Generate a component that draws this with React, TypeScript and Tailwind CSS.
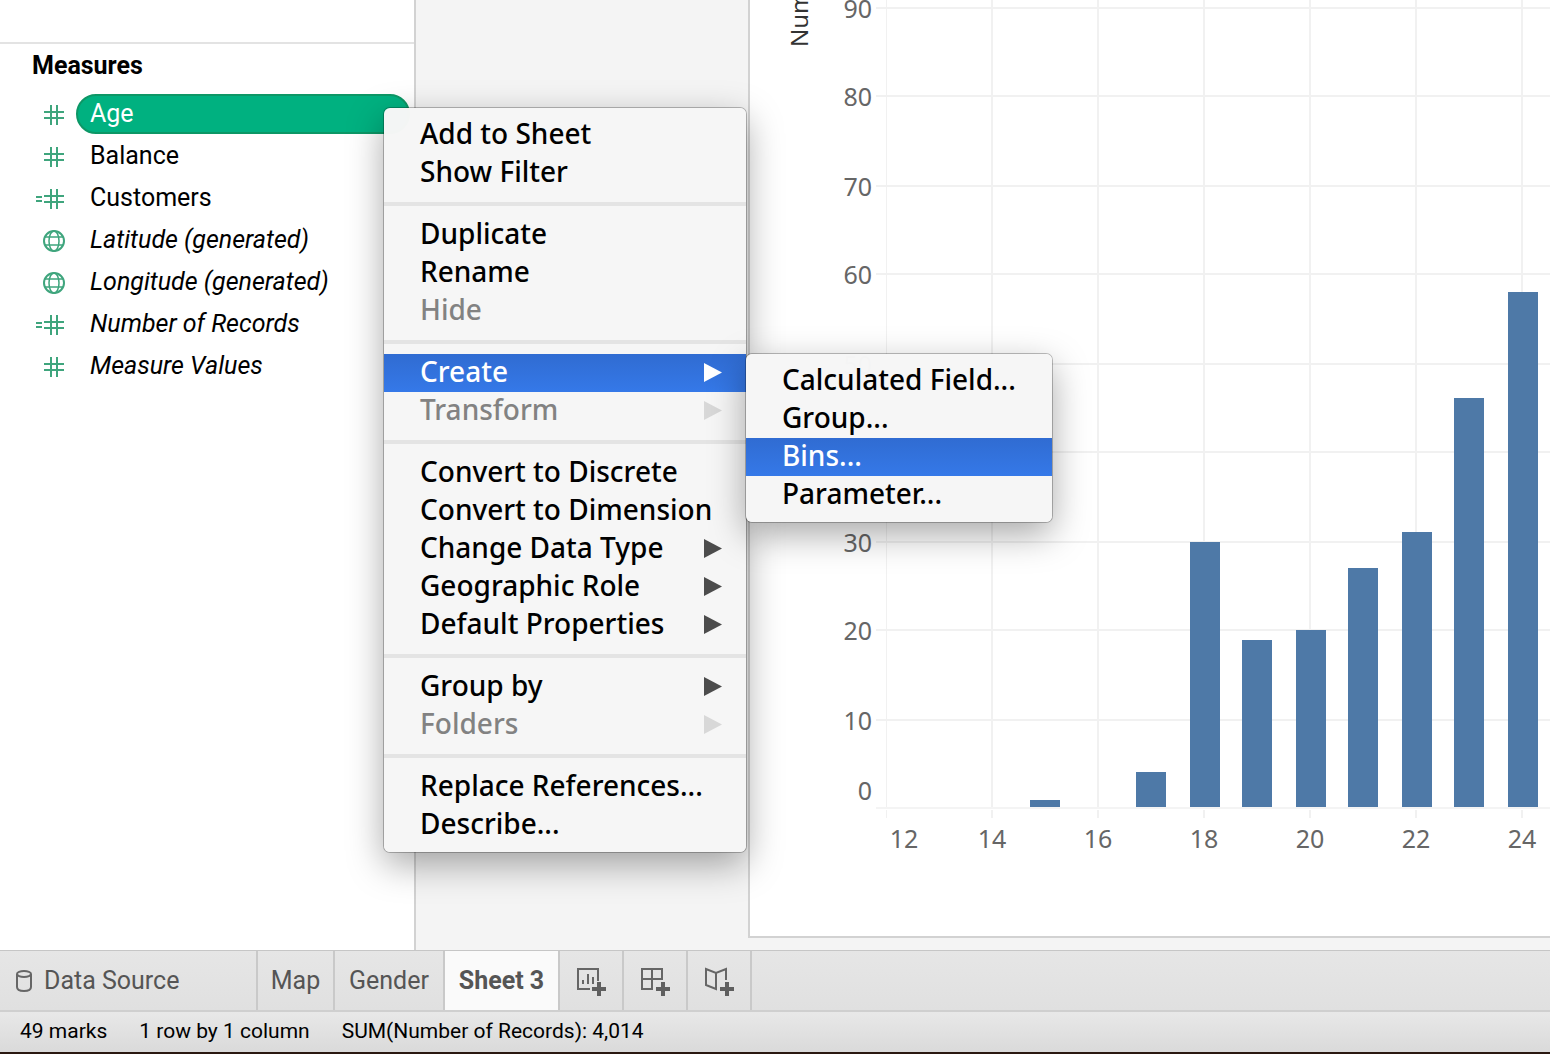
import React from "react";

type Field = { label: string; icon: "number" | "calc" | "globe"; italic?: boolean };

const fields: Field[] = [
  { label: "Balance", icon: "number" },
  { label: "Customers", icon: "calc" },
  { label: "Latitude (generated)", icon: "globe", italic: true },
  { label: "Longitude (generated)", icon: "globe", italic: true },
  { label: "Number of Records", icon: "calc", italic: true },
  { label: "Measure Values", icon: "number", italic: true },
];

type Entry = { label: string; disabled?: boolean; sub?: boolean; active?: boolean };

const menuGroups: Entry[][] = [
  [{ label: "Add to Sheet" }, { label: "Show Filter" }],
  [{ label: "Duplicate" }, { label: "Rename" }, { label: "Hide", disabled: true }],
  [
    { label: "Create", sub: true, active: true },
    { label: "Transform", sub: true, disabled: true },
  ],
  [
    { label: "Convert to Discrete" },
    { label: "Convert to Dimension" },
    { label: "Change Data Type", sub: true },
    { label: "Geographic Role", sub: true },
    { label: "Default Properties", sub: true },
  ],
  [
    { label: "Group by", sub: true },
    { label: "Folders", sub: true, disabled: true },
  ],
  [{ label: "Replace References..." }, { label: "Describe..." }],
];

const createEntries: Entry[] = [
  { label: "Calculated Field..." },
  { label: "Group..." },
  { label: "Bins...", active: true },
  { label: "Parameter..." },
];

function FieldIcon({ kind }: { kind: Field["icon"] }) {
  return (
    <svg width="30" height="24" viewBox="0 0 30 24" fill="none" stroke="#3fa57d" strokeWidth="2" aria-hidden="true">
      {kind === "globe" ? (
        <g>
          <circle cx="18" cy="13" r="10" />
          <ellipse cx="18" cy="13" rx="5" ry="10" strokeWidth="1.5" />
          <path d="M9 9h18M9 17h18" strokeWidth="1.5" />
        </g>
      ) : (
        <path d="M15 3v20M21 3v20M8 10h20M8 16h20" />
      )}
      {kind === "calc" && <path d="M0 11h6M0 15h6" />}
    </svg>
  );
}

function MenuItem({ entry }: { entry: Entry }) {
  const tone = entry.active
    ? "bg-linear-to-b from-[#2c69d1]/98 to-[#3176e8]/98 text-white"
    : entry.disabled
      ? "text-[#828282]"
      : "text-black";
  const arrow = entry.active ? "#ffffff" : entry.disabled ? "#d8d8d8" : "#4c4c4c";
  return (
    <button
      type="button"
      role="menuitem"
      disabled={entry.disabled}
      className={`flex h-[38px] w-full items-center justify-between pr-6 pl-9 text-left whitespace-nowrap ${tone}`}
    >
      <span className="pb-1">{entry.label}</span>
      {entry.sub && (
        <svg width="18" height="20" viewBox="0 0 18 20" aria-hidden="true">
          <path d="M0 0v19L18 9.5z" fill={arrow} />
        </svg>
      )}
    </button>
  );
}

const menuBox =
  "absolute rounded-md bg-[#f6f6f6]/99 py-2 font-['Noto_Sans',sans-serif] text-[28px] leading-[34px] font-medium shadow-[0_0_0_1px_rgba(0,0,0,0.25),0_12px_36px_rgba(0,0,0,0.35)]";

function ContextMenu() {
  return (
    <div role="menu" aria-label="Age" className={`${menuBox} top-[14px] left-[308px] z-10 w-[362px]`}>
      {menuGroups.map((group, i) => (
        <React.Fragment key={i}>
          {i > 0 && <hr className="my-[10px] border-0 border-t-4 border-[#e4e4e4]" />}
          {group.map((entry) => (
            <MenuItem key={entry.label} entry={entry} />
          ))}
        </React.Fragment>
      ))}
      <div role="menu" aria-label="Create" className={`${menuBox} top-[246px] left-full w-[306px]`}>
        {createEntries.map((entry) => (
          <MenuItem key={entry.label} entry={entry} />
        ))}
      </div>
    </div>
  );
}

function Sidebar() {
  return (
    <aside className="w-[416px] shrink-0 border-r-2 border-[#d2d2d2] bg-white">
      <div className="h-11 border-b-2 border-[#e3e3e3]" />
      <h2 className="pt-[6px] pl-8 text-[25px] leading-8 font-bold">Measures</h2>
      <ul className="mt-[11px]">
        <li className="flex h-[42px] items-center pl-9">
          <FieldIcon kind="number" />
          <div className="relative ml-[10px] w-[334px] shrink-0">
            <button
              type="button"
              className="h-10 w-full rounded-full border-2 border-[#0d9766] bg-[#00b180] pl-3 text-left leading-8 text-white"
            >
              Age
            </button>
            <ContextMenu />
          </div>
        </li>
        {fields.map((f) => (
          <li key={f.label} className="flex h-[42px] items-center pl-9">
            <FieldIcon kind={f.icon} />
            <span className={f.italic ? "ml-6 italic" : "ml-6"}>{f.label}</span>
          </li>
        ))}
      </ul>
    </aside>
  );
}

const rows = [
  { v: "90", y: 8 },
  { v: "80", y: 96 },
  { v: "70", y: 186 },
  { v: "60", y: 274 },
  { v: "50", y: 364 },
  { v: "40", y: 452 },
  { v: "30", y: 542 },
  { v: "20", y: 630 },
  { v: "10", y: 720 },
];

const columns = [
  { v: "14", x: 242 },
  { v: "16", x: 348 },
  { v: "18", x: 454 },
  { v: "20", x: 560 },
  { v: "22", x: 666 },
  { v: "24", x: 772 },
];

const bars = [
  { x: 280, y: 800 },
  { x: 386, y: 772 },
  { x: 440, y: 542 },
  { x: 492, y: 640 },
  { x: 546, y: 630 },
  { x: 598, y: 568 },
  { x: 652, y: 532 },
  { x: 704, y: 398 },
  { x: 758, y: 292 },
];

function Chart() {
  return (
    <svg
      width="800"
      height="936"
      viewBox="0 0 800 936"
      className="block font-['Noto_Sans',sans-serif] text-[25px]"
      role="img"
      aria-label="Histogram of age"
    >
      <g stroke="#f1f1f1" strokeWidth="2">
        {rows.map((r) => (
          <path key={r.v} d={`M126 ${r.y}H800`} />
        ))}
        {columns.map((c) => (
          <path key={c.v} d={`M${c.x} 0V807M${c.x} 810V818`} />
        ))}
        <path d="M126 808H800" stroke="#f4f4f4" />
        <path d="M136.5 0V807M136.5 810V818" strokeWidth="1" />
      </g>
      {bars.map((b) => (
        <rect key={b.x} x={b.x} y={b.y} width="30" height={807 - b.y} fill="#4e79a7" />
      ))}
      <g fill="#666666" textAnchor="end">
        {rows.map((r) => (
          <text key={r.v} x="122" y={r.y + 10}>
            {r.v}
          </text>
        ))}
        <text x="122" y="800">0</text>
      </g>
      <g fill="#666666" textAnchor="middle">
        <text x="154" y="848">12</text>
        {columns.map((c) => (
          <text key={c.v} x={c.x} y="848">
            {c.v}
          </text>
        ))}
      </g>
      <text transform="translate(58 47) rotate(-90)" fill="#333333" fontSize="24">
        Num
      </text>
    </svg>
  );
}

function Plus() {
  return <path d="M17 24h14M24 17v14" stroke="#5f5f5f" strokeWidth="4" />;
}

const newTabs = [
  {
    label: "New worksheet",
    art: <path d="M15 24H3V4h20v12M8 19v-4M13 19V9M18 19v-7" />,
  },
  {
    label: "New dashboard",
    art: <path d="M14 24H3V4h20v10H3M13 4v20" />,
  },
  {
    label: "New story",
    art: <path d="M23 15V4l-10 4L3 4v16l10 4V8" />,
  },
];

const tabEdge = "border-r-2 border-[#c9c9c9]";

function TabBar() {
  return (
    <nav
      aria-label="Sheets"
      className="flex h-[60px] border-t border-[#c6c6c6] bg-linear-to-b from-[#e6e6e6] to-[#e0e0e0] text-[25px] text-[#555555]"
    >
      <button type="button" className={`flex w-[258px] items-center pl-4 ${tabEdge}`}>
        <svg width="16" height="24" viewBox="0 0 16 24" fill="none" stroke="#666666" strokeWidth="2" aria-hidden="true">
          <ellipse cx="8" cy="5" rx="7" ry="3" />
          <path d="M1 5v13c0 3 2 4 7 4s7-1 7-4V5" />
        </svg>
        <span className="ml-3">Data Source</span>
      </button>
      <button type="button" className={`w-[77px] ${tabEdge}`}>Map</button>
      <button type="button" className={`w-[110px] ${tabEdge}`}>Gender</button>
      <button type="button" aria-current="page" className={`w-[115px] bg-[#fafafa] font-bold ${tabEdge}`}>
        Sheet 3
      </button>
      {newTabs.map((t) => (
        <button
          key={t.label}
          type="button"
          aria-label={t.label}
          className={`flex w-16 items-center justify-center ${tabEdge}`}
        >
          <svg width="32" height="32" viewBox="0 0 32 32" fill="none" stroke="#666666" strokeWidth="2" aria-hidden="true">
            {t.art}
            <Plus />
          </svg>
        </button>
      ))}
    </nav>
  );
}

export default function App() {
  return (
    <div className="flex min-h-screen flex-col overflow-hidden bg-[#f4f4f4] font-[Roboto,sans-serif] text-[25px] text-black">
      <div className="flex grow">
        <Sidebar />
        <div className="w-[332px] shrink-0" />
        <main className="mb-3 min-w-0 grow overflow-hidden border-b-2 border-l-2 border-[#d2d2d2] bg-white">
          <Chart />
        </main>
      </div>
      <TabBar />
      <footer className="flex h-11 items-center gap-8 border-t-2 border-b-2 border-t-[#cfcfcf] border-b-[#2a1810] bg-linear-to-b from-[#e8e8e8] to-[#dadada] pl-5 text-[21px]">
        <span>49 marks</span>
        <span>1 row by 1 column</span>
        <span>SUM(Number of Records): 4,014</span>
      </footer>
    </div>
  );
}
